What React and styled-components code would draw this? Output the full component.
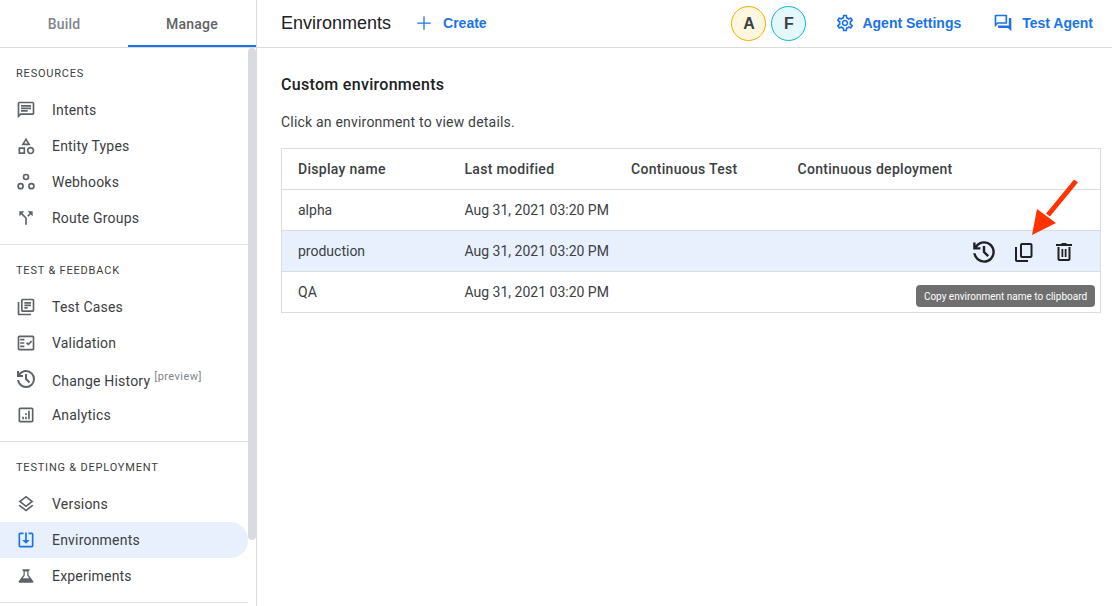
import React from "react";
import styled, { createGlobalStyle } from "styled-components";

const Global = createGlobalStyle`
  html, body { margin: 0; padding: 0; height: 100%; background: #fff; overflow: hidden; }
  body { font-family: Roboto, "Liberation Sans", sans-serif; color: #3c4043; }
  #root { height: 100%; }
`;

const Page = styled.div`
  display: flex;
  width: 1112px;
  height: 606px;
  overflow: hidden;
  position: relative;
`;

const Sidebar = styled.aside`
  width: 256px;
  flex: none;
  border-right: 1px solid #dadce0;
  position: relative;
  overflow: hidden;
`;

const Tabs = styled.div`
  display: flex;
  height: 47px;
  border-bottom: 1px solid #dadce0;
`;

const Tab = styled.div`
  flex: 1;
  display: flex;
  align-items: center;
  justify-content: center;
  font-size: 14px;
  font-weight: 500;
  letter-spacing: 0.2px;
  padding-top: 3px;
  box-sizing: border-box;
  height: 47px;
  color: ${(p) => (p.$active ? "#5f6368" : "#80868b")};
  border-bottom: 2px solid ${(p) => (p.$active ? "#1a73e8" : "transparent")};
`;

const Thumb = styled.div`
  position: absolute;
  top: 48px;
  right: 0;
  width: 8px;
  height: 492px;
  border-radius: 4px;
  background: #dadbe0;
`;

const Nav = styled.nav`
  width: 248px;
`;

const Section = styled.section`
  padding: 18px 0 8px;
  border-bottom: 1px solid #e0e0e0;
`;

const SectionLabel = styled.div`
  font-size: 11px;
  line-height: 16px;
  letter-spacing: 0.8px;
  color: #3c4043;
  padding-left: 16px;
  margin-bottom: 10px;
`;

const Row = styled.div`
  display: flex;
  align-items: center;
  height: 36px;
  padding-left: 16px;
  font-size: 14px;
  letter-spacing: 0.2px;
  color: #3c4043;
  background: ${(p) => (p.$active ? "#e8f0fe" : "transparent")};
  border-radius: 0 18px 18px 0;
  svg {
    flex: none;
    margin-right: 16px;
    color: ${(p) => (p.$active ? "#1a73e8" : "#5f6368")};
  }
`;

const Preview = styled.sup`
  font-size: 11px;
  color: #80868b;
  margin-left: 4px;
  letter-spacing: 0.45px;
`;

const Main = styled.main`
  flex: 1;
  min-width: 0;
  display: flex;
  flex-direction: column;
`;

const Header = styled.header`
  height: 47px;
  border-bottom: 1px solid #dadce0;
  display: flex;
  align-items: center;
  padding: 0 19px 0 24px;
  flex: none;
`;

const Title = styled.h1`
  margin: 0 23px 0 0;
  font-family: "Liberation Sans", Arial, sans-serif;
  font-weight: 400;
  font-size: 18px;
  color: #202124;
`;

const Action = styled.div`
  display: flex;
  align-items: center;
  gap: ${(p) => p.$gap || 9}px;
  padding-bottom: 2px;
  font-family: "Liberation Sans", Arial, sans-serif;
  font-weight: 700;
  font-size: 14px;
  color: #1a73e8;
  margin-left: ${(p) => p.$ml || 0}px;
`;

const Avatars = styled.div`
  margin-left: auto;
  display: flex;
  gap: 5px;
`;

const Avatar = styled.div`
  width: 35px;
  height: 35px;
  box-sizing: border-box;
  border-radius: 50%;
  border: 1px solid ${(p) => p.$ring};
  background: ${(p) => p.$bg};
  display: flex;
  align-items: center;
  justify-content: center;
  font-family: "Liberation Sans", Arial, sans-serif;
  font-weight: 700;
  font-size: 16px;
  color: #3c4043;
`;

const Content = styled.div`
  padding: 27px 11px 0 24px;
`;

const Heading = styled.h2`
  margin: 0;
  font-size: 16px;
  line-height: 20px;
  font-weight: 500;
  letter-spacing: 0.3px;
  color: #202124;
`;

const Hint = styled.p`
  margin: 17px 0 0;
  font-size: 14px;
  line-height: 20px;
  letter-spacing: 0.2px;
  color: #3c4043;
`;

const Table = styled.div`
  margin-top: 16px;
  border: 1px solid #dadce0;
`;

const TableRow = styled.div`
  display: grid;
  grid-template-columns: repeat(4, 166.5px) 1fr;
  align-items: center;
  height: 40px;
  padding-left: 16px;
  font-size: 14px;
  letter-spacing: ${(p) => (p.$head ? "0.3px" : "0")};
  background: ${(p) => (p.$selected ? "#e8f0fe" : "#fff")};
  font-weight: ${(p) => (p.$head ? 500 : 400)};
  border-top: ${(p) => (p.$head ? "none" : "1px solid #dadce0")};
`;

const RowIcons = styled.div`
  display: flex;
  justify-content: flex-end;
  gap: 16px;
  padding-right: 24px;
  margin-left: -40px;
  color: #202124;
  margin-top: 2px;
`;

const Tooltip = styled.div`
  position: absolute;
  left: 916px;
  top: 285px;
  width: 179px;
  height: 22px;
  border-radius: 4px;
  background: #6f6f6f;
  color: #fff;
  font-size: 10px;
  display: flex;
  align-items: center;
  justify-content: center;
`;

const Arrow = styled.svg`
  position: absolute;
  left: 1025px;
  top: 175px;
`;

const Icon = ({ d, size = 20, evenodd, box = "0 0 24 24" }) => (
  <svg width={size} height={size} viewBox={box} fill="currentColor">
    <path d={d} fillRule={evenodd ? "evenodd" : undefined} />
  </svg>
);

const P = {
  message: "M20 2H4c-1.1 0-2 .9-2 2v18l4-4h14c1.1 0 2-.9 2-2V4c0-1.1-.9-2-2-2zm0 14H5.17L4 17.17V4h16v12zM6 12h8v2H6zm0-3h12v2H6zm0-3h12v2H6z",
  category: "M12 2l-5.5 9h11L12 2zm0 3.84L13.93 9h-3.87L12 5.84zM17.5 13c-2.49 0-4.5 2.01-4.5 4.5s2.01 4.5 4.5 4.5 4.5-2.01 4.5-4.5-2.01-4.5-4.5-4.5zm0 7c-1.38 0-2.5-1.12-2.5-2.5s1.12-2.5 2.5-2.5 2.5 1.12 2.5 2.5-1.12 2.5-2.5 2.5zM3 21.5h8v-8H3v8zm2-6h4v4H5v-4z",
  split: "M14 4l2.29 2.29-2.88 2.88 1.42 1.42 2.88-2.88L20 10V4zm-4 0H4v6l2.29-2.29 4.71 4.7V20h2v-8.41l-5.29-5.3z",
  books: "M4 6H2v14c0 1.1.9 2 2 2h14v-2H4V6zm16-4H8c-1.1 0-2 .9-2 2v12c0 1.1.9 2 2 2h12c1.1 0 2-.9 2-2V4c0-1.1-.9-2-2-2zm0 14H8V4h12v12zM10 9h8v2h-8zm0 3h4v2h-4zm0-6h8v2h-8z",
  fact: "M20 3H4c-1.1 0-2 .9-2 2v14c0 1.1.9 2 2 2h16c1.1 0 2-.9 2-2V5c0-1.1-.9-2-2-2zm0 16H4V5h16v14zM19.41 10.42l-1.42-1.42-3.17 3.17-1.41-1.42L12 12.17 14.82 15zM5 7h5v2H5zm0 4h5v2H5zm0 4h5v2H5z",
  history: "M12 21q-3.45 0-6.01-2.29T3.05 13h2.05q.35 2.6 2.31 4.3T12 19q2.93 0 4.96-2.04T19 12t-2.04-4.96T12 5q-1.72 0-3.23.8T6.25 8H9v2H3V4h2v2.35Q6.28 4.75 8.11 3.88T12 3q3.75 0 6.38 2.63T21 12t-2.63 6.38T12 21zm2.8-4.8L11 12.4V7h2v4.6l3.2 3.2z",
  analytics: "M19 3H5c-1.1 0-2 .9-2 2v14c0 1.1.9 2 2 2h14c1.1 0 2-.9 2-2V5c0-1.1-.9-2-2-2zm0 16H5V5h14v14zM7.5 14h2v3h-2zm7-7h2v10h-2zm-3.5 7h2v3h-2zm0-4h2v2h-2z",
  layers: "M11.99 18.54l-7.37-5.73L3 14.07l9 7 9-7-1.63-1.27zM12 16l7.36-5.73L21 9l-9-7-9 7 1.63 1.27L12 16zm0-11.47L17.74 9 12 13.47 6.26 9 12 4.53z",
  inbox: "M9 3H5c-1.1 0-2 .9-2 2v14c0 1.1.9 2 2 2h14c1.1 0 2-.9 2-2V5c0-1.1-.9-2-2-2h-4v2h4v14H5V5h4zM12 16.5l4.5-4.5H13V3h-2v9H7.5z",
  flask: "M15.96 4H8.04c-.42 0-.65.48-.39.81L9 6.5v4.17L3.2 18.4C2.71 19.06 3.18 20 4 20h16c.82 0 1.29-.94.8-1.6L15 10.67V6.5l1.35-1.69c.26-.33.03-.81-.39-.81zM13.5 6.5v4.9l2.4 3.2H8.1l2.4-3.2V6.5z",
  gear: "M19.43 12.98c.04-.32.07-.64.07-.98 0-.34-.03-.66-.07-.98l2.11-1.65c.19-.15.24-.42.12-.64l-2-3.46c-.09-.16-.26-.25-.44-.25-.06 0-.12.01-.17.03l-2.49 1c-.52-.4-1.08-.73-1.69-.98l-.38-2.65C14.46 2.18 14.25 2 14 2h-4c-.25 0-.46.18-.49.42l-.38 2.65c-.61.25-1.17.59-1.69.98l-2.49-1c-.06-.02-.12-.03-.18-.03-.17 0-.34.09-.43.25l-2 3.46c-.13.22-.07.49.12.64l2.11 1.65c-.04.32-.07.65-.07.98 0 .33.03.66.07.98l-2.11 1.65c-.19.15-.24.42-.12.64l2 3.46c.09.16.26.25.44.25.06 0 .12-.01.17-.03l2.49-1c.52.4 1.08.73 1.69.98l.38 2.65c.03.24.24.42.49.42h4c.25 0 .46-.18.49-.42l.38-2.65c.61-.25 1.17-.59 1.69-.98l2.49 1c.06.02.12.03.18.03.17 0 .34-.09.43-.25l2-3.46c.12-.22.07-.49-.12-.64l-2.11-1.65zm-1.98-1.71c.04.31.05.52.05.73 0 .21-.02.43-.05.73l-.14 1.13.89.7 1.08.84-.7 1.21-1.27-.51-1.04-.42-.9.68c-.43.32-.84.56-1.25.73l-1.06.43-.16 1.13-.2 1.35h-1.4l-.19-1.35-.16-1.13-1.06-.43c-.43-.18-.83-.41-1.23-.71l-.91-.7-1.06.43-1.27.51-.7-1.21 1.08-.84.89-.7-.14-1.13c-.03-.31-.05-.54-.05-.74s.02-.43.05-.73l.14-1.13-.89-.7-1.08-.84.7-1.21 1.27.51 1.04.42.9-.68c.43-.32.84-.56 1.25-.73l1.06-.43.16-1.13.2-1.35h1.39l.19 1.35.16 1.13 1.06.43c.43.18.83.41 1.23.71l.91.7 1.06-.43 1.27-.51.7 1.21-1.07.85-.89.7.14 1.13zM12 8c-2.21 0-4 1.79-4 4s1.79 4 4 4 4-1.79 4-4-1.79-4-4-4zm0 6c-1.1 0-2-.9-2-2s.9-2 2-2 2 .9 2 2-.9 2-2 2z",
  forum: "M15 4v7H5.17l-.59.59-.58.58V4h11m1-2H3c-.55 0-1 .45-1 1v14l4-4h10c.55 0 1-.45 1-1V3c0-.55-.45-1-1-1zm5 4h-2v9H6v2c0 .55.45 1 1 1h11l4 4V7c0-.55-.45-1-1-1z",
  copy: "M5 7H3v13c0 1.1.9 2 2 2h11v-2H5V7zM18.5 3H10c-1.1 0-2 .9-2 2v11c0 1.1.9 2 2 2h8.5c1.1 0 2-.9 2-2V5c0-1.1-.9-2-2-2zm0 13H10V5h8.5v11z",
  trash: "M15 4l-1-1H10L9 4H4v2h16V4zM5.5 7v12c0 1.1.9 2 2 2h9c1.1 0 2-.9 2-2V7h-2v12h-9V7zM9.5 9h1.75v8H9.5zM12.75 9h1.75v8h-1.75z",
  plus: "M20 11.25h-7.25V4h-1.5v7.25H4v1.5h7.25V20h1.5v-7.25H20z",
};

const HISTORY_BOX = "2 2 20 20";

const Webhook = () => (
  <svg width="20" height="20" viewBox="0 0 24 24" fill="none" stroke="currentColor" strokeWidth="2">
    <circle cx="12" cy="6" r="3" />
    <circle cx="5.5" cy="17" r="3" />
    <circle cx="18.5" cy="17" r="3" />
  </svg>
);

const sections = [
  {
    label: "RESOURCES",
    items: [
      { name: "Intents", icon: <Icon d={P.message} /> },
      { name: "Entity Types", icon: <Icon d={P.category} /> },
      { name: "Webhooks", icon: <Webhook /> },
      { name: "Route Groups", icon: <Icon d={P.split} /> },
    ],
  },
  {
    label: "TEST & FEEDBACK",
    items: [
      { name: "Test Cases", icon: <Icon d={P.books} /> },
      { name: "Validation", icon: <Icon d={P.fact} /> },
      { name: "Change History", icon: <Icon d={P.history} box={HISTORY_BOX} />, preview: true },
      { name: "Analytics", icon: <Icon d={P.analytics} /> },
    ],
  },
  {
    label: "TESTING & DEPLOYMENT",
    items: [
      { name: "Versions", icon: <Icon d={P.layers} /> },
      { name: "Environments", icon: <Icon d={P.inbox} />, active: true },
      { name: "Experiments", icon: <Icon d={P.flask} evenodd /> },
    ],
  },
];

const DATE = "Aug 31, 2021 03:20 PM";

export default function App() {
  return (
    <Page>
      <Global />
      <Sidebar>
        <Tabs>
          <Tab>Build</Tab>
          <Tab $active>Manage</Tab>
        </Tabs>
        <Nav>
          {sections.map((s) => (
            <Section key={s.label}>
              <SectionLabel>{s.label}</SectionLabel>
              {s.items.map((it) => (
                <Row key={it.name} $active={it.active}>
                  {it.icon}
                  <span>
                    {it.name}
                    {it.preview && <Preview>[preview]</Preview>}
                  </span>
                </Row>
              ))}
            </Section>
          ))}
        </Nav>
        <Thumb />
      </Sidebar>
      <Main>
        <Header>
          <Title>Environments</Title>
          <Action>
            <Icon d={P.plus} size={20} />
            Create
          </Action>
          <Avatars>
            <Avatar $ring="#f9ab00" $bg="#fef7e0">A</Avatar>
            <Avatar $ring="#12b5cb" $bg="#e4f7fb">F</Avatar>
          </Avatars>
          <Action $ml={29} $gap={7}>
            <Icon d={P.gear} size={20} />
            Agent Settings
          </Action>
          <Action $ml={32}>
            <Icon d={P.forum} size={20} />
            Test Agent
          </Action>
        </Header>
        <Content>
          <Heading>Custom environments</Heading>
          <Hint>Click an environment to view details.</Hint>
          <Table>
            <TableRow $head>
              <span>Display name</span>
              <span>Last modified</span>
              <span>Continuous Test</span>
              <span>Continuous deployment</span>
              <span />
            </TableRow>
            <TableRow>
              <span>alpha</span>
              <span>{DATE}</span>
            </TableRow>
            <TableRow $selected>
              <span>production</span>
              <span>{DATE}</span>
              <span />
              <span />
              <RowIcons>
                <Icon d={P.history} size={24} box={HISTORY_BOX} />
                <Icon d={P.copy} size={24} />
                <Icon d={P.trash} size={24} />
              </RowIcons>
            </TableRow>
            <TableRow>
              <span>QA</span>
              <span>{DATE}</span>
            </TableRow>
          </Table>
        </Content>
      </Main>
      <Tooltip>Copy environment name to clipboard</Tooltip>
      <Arrow width="60" height="65" viewBox="0 0 60 65">
        <path d="M51 6 L23 40" stroke="#ff3300" strokeWidth="5" fill="none" />
        <path d="M7 60 L12 34 L31 48 Z" fill="#ff3300" />
      </Arrow>
    </Page>
  );
}
